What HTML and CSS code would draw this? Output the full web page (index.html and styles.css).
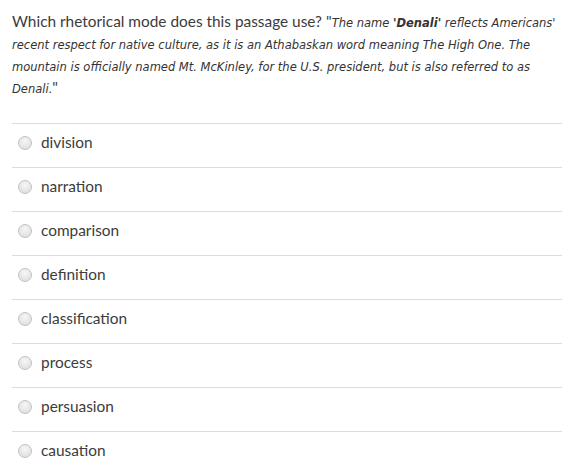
FILE: index.html
```html
<!DOCTYPE html>
<html>
<head>
<meta charset="utf-8">
<link rel="stylesheet" href="styles.css">
</head>
<body>
<div class="quiz">
  <div class="question">Which rhetorical mode does this passage use? "<span class="passage">The name <b>'Denali'</b> reflects Americans' recent respect for native culture, as it is an Athabaskan word meaning The High One. The mountain is officially named Mt. McKinley, for the U.S. president, but is also referred to as Denali.</span>"</div>
  <ul class="options">
    <li class="option"><span class="radio"></span><span class="label">division</span></li>
    <li class="option"><span class="radio"></span><span class="label">narration</span></li>
    <li class="option"><span class="radio"></span><span class="label">comparison</span></li>
    <li class="option"><span class="radio"></span><span class="label">definition</span></li>
    <li class="option"><span class="radio"></span><span class="label">classification</span></li>
    <li class="option"><span class="radio"></span><span class="label">process</span></li>
    <li class="option"><span class="radio"></span><span class="label">persuasion</span></li>
    <li class="option"><span class="radio"></span><span class="label">causation</span></li>
  </ul>
</div>
</body>
</html>
```
FILE: styles.css
```css
html, body {
  margin: 0;
  padding: 0;
  background: #fff;
}
.quiz {
  padding: 10px 12px 0 12px;
  width: 550px;
  color: #3c3c3c;
  font-family: Lato, "Open Sans", sans-serif;
}
.question {
  font-size: 15.4px;
  line-height: 22px;
  padding-bottom: 25px;
}
.passage {
  font-family: "DejaVu Sans", Verdana, sans-serif;
  font-style: italic;
  font-size: 11.5px;
  line-height: 1;
  color: #333;
}
.passage b {
  font-weight: bold;
}
.options {
  list-style: none;
  margin: 0;
  padding: 0;
}
.option {
  display: flex;
  align-items: center;
  height: 37px;
  padding-bottom: 6px;
  border-top: 1px solid #dcdcdc;
  padding-left: 6px;
}
.radio {
  width: 12px;
  height: 12px;
  border-radius: 50%;
  border: 1px solid #c2c2c2;
  background: radial-gradient(circle at 50% 35%, #f6f6f6, #dadada);
  margin-right: 9px;
  flex: none;
}
.label {
  font-size: 15.4px;
  color: #3c3c3c;
  position: relative;
  top: -1px;
}
```
